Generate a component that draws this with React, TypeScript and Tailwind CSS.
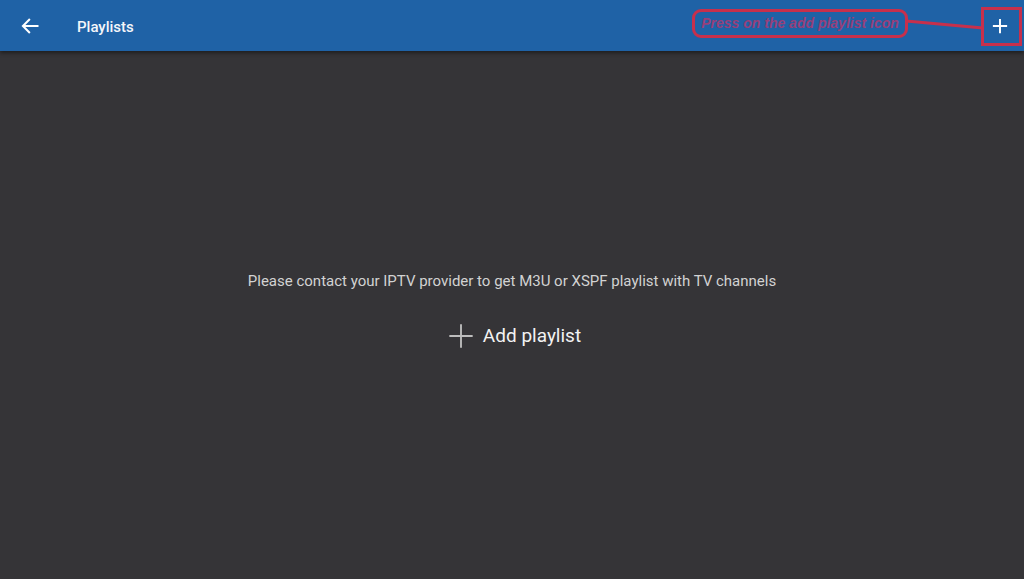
import React from 'react';

const PlusIcon = ({ size, stroke, color }: { size: number; stroke: number; color: string }) => (
  <svg width={size} height={size} viewBox="0 0 24 24" fill="none">
    <path d="M12 2v20M2 12h20" stroke={color} strokeWidth={stroke} />
  </svg>
);

const Header = () => (
  <header className="relative z-10 flex h-[51px] items-center bg-[#1f62a6] shadow-[0_2px_4px_rgba(0,0,0,0.45)]">
    <button className="flex h-[51px] w-[60px] items-center justify-center text-white">
      <svg width="20" height="20" viewBox="0 0 24 24" fill="none">
        <path d="M21 12H4M11 4.5 3.5 12l7.5 7.5" stroke="#fff" strokeWidth="2.4" strokeLinecap="square" />
      </svg>
    </button>
    <h1 className="ml-[17px] pt-[3px] text-[15px] font-medium text-[#f4f6fa]">Playlists</h1>

    <button className="ml-auto flex h-[51px] w-[46px] items-center justify-center mr-[1px]">
      <svg width="18" height="18" viewBox="0 0 24 24" fill="none">
        <path d="M12 2.5v19M2.5 12h19" stroke="#fff" strokeWidth="2.6" />
      </svg>
    </button>

    {/* hint callout over the toolbar */}
    <div className="pointer-events-none absolute left-[692px] top-[9px] flex h-[29px] w-[216px] items-center justify-center rounded-[9px] border-[3px] border-[#c7304c]">
      <span className="text-[14px] font-bold italic text-[#96407a] [font-family:'Liberation_Sans',Arial,sans-serif]">
        Press on the add playlist icon
      </span>
    </div>
    <svg className="pointer-events-none absolute left-[906px] top-[18px]" width="78" height="14" viewBox="0 0 78 14">
      <path d="M0 3 L77 10" stroke="#c7304c" strokeWidth="3" />
    </svg>
    <div className="pointer-events-none absolute left-[981px] top-[7px] h-[39px] w-[41px] border-[3px] border-[#c7304c]" />
  </header>
);

export default function App() {
  return (
    <div className="flex h-[579px] w-[1024px] flex-col overflow-hidden bg-[#353437] [font-family:Roboto,'Noto_Sans',sans-serif]">
      <Header />
      <main className="flex flex-1 flex-col items-center pt-[219px]">
        <p className="text-[15px] text-[#d2d2d2]">
          Please contact your IPTV provider to get M3U or XSPF playlist with TV channels
        </p>
        <button className="mt-[29px] flex items-center gap-[8px] ml-[4px]">
          <PlusIcon size={28} stroke={1.6} color="#bdbdbd" />
          <span className="text-[19px] text-[#f2f2f2]">Add playlist</span>
        </button>
      </main>
    </div>
  );
}
